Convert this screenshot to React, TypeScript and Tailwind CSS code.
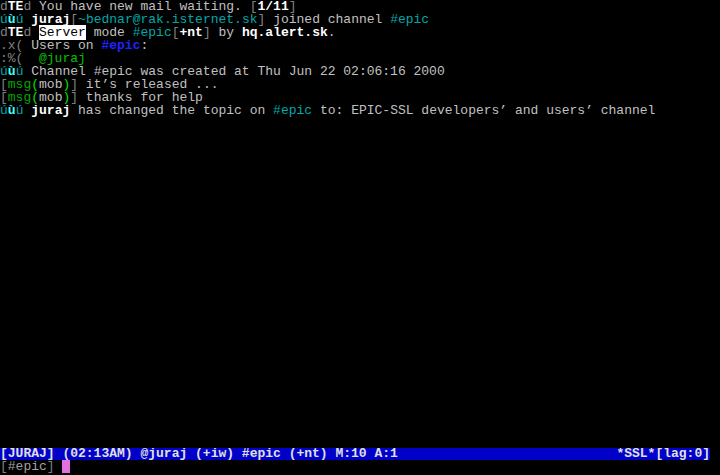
type Seg = [string, string?];

const dim = 'text-[#808080]';
const fg = 'text-[#c0c0c0]';
const hi = 'text-white font-bold';
const teal = 'text-[#00a8a8]';
const green = 'text-[#00a800]';
const lime = 'text-[#00e000]';

const uu: Seg[] = [['ú', teal], ['ù', 'text-[#40ffff] font-bold'], ['ú', teal]];
const dte: Seg[] = [['d', dim], ['TE', hi], ['d', dim]];
const msg: Seg[] = [['[', dim], ['msg', green], ['(', lime], ['mob', fg], [')', lime], [']', dim]];

const lines: Seg[][] = [
  [...dte, [' You have new mail waiting. ', fg], ['[', dim], ['1/11', hi], [']', dim]],
  [...uu, [' '], ['juraj', hi], ['[', dim], ['~bednar@rak.isternet.sk', teal], [']', dim], [' joined channel ', fg], ['#epic', teal]],
  [...dte, [' '], ['Server', 'bg-white text-black'], [' mode ', fg], ['#epic', teal], ['[', dim], ['+nt', hi], [']', dim], [' by ', fg], ['hq.alert.sk', hi], ['.', fg]],
  [['.x(', dim], [' Users on ', fg], ['#epic', 'text-[#2020ff] font-bold'], [':', fg]],
  [[':%(', dim], ['  '], ['@juraj', 'text-[#00c000]']],
  [...uu, [' Channel #epic was created at Thu Jun 22 02:06:16 2000', fg]],
  [...msg, [' it’s released ...', fg]],
  [...msg, [' thanks for help', fg]],
  [...uu, [' '], ['juraj', hi], [' has changed the topic on ', fg], ['#epic', teal], [' to: EPIC-SSL developers’ and users’ channel', fg]],
];

function Line({ segs }: { segs: Seg[] }) {
  return (
    <div className="h-[13px] leading-[13px] whitespace-pre">
      {segs.map((s, i) => (
        <span key={i} className={s[1] ?? fg}>{s[0]}</span>
      ))}
    </div>
  );
}

export default function App() {
  return (
    <div className="w-[720px] h-[475px] bg-black flex flex-col overflow-hidden font-['Liberation_Mono',monospace] text-[13px] text-[#c0c0c0]">
      <div className="flex-1">
        {lines.map((l, i) => (
          <Line key={i} segs={l} />
        ))}
      </div>
      <div className="w-[710px] h-[12px] leading-[12px] bg-[#0000c8] text-[#e0e0e0] font-bold flex justify-between whitespace-pre">
        <span>[JURAJ] (02:13AM) @juraj (+iw) #epic (+nt) M:10 A:1</span>
        <span>*SSL*[lag:0]</span>
      </div>
      <div className="h-[13px] leading-[13px] mb-[2px] flex items-center whitespace-pre">
        <span className={dim}>[</span>
        <span className="text-[#a0a0a0]">#epic</span>
        <span className={dim}>] </span>
        <span className="inline-block w-[8px] h-[13px] bg-[#e070e0]" />
      </div>
    </div>
  );
}
